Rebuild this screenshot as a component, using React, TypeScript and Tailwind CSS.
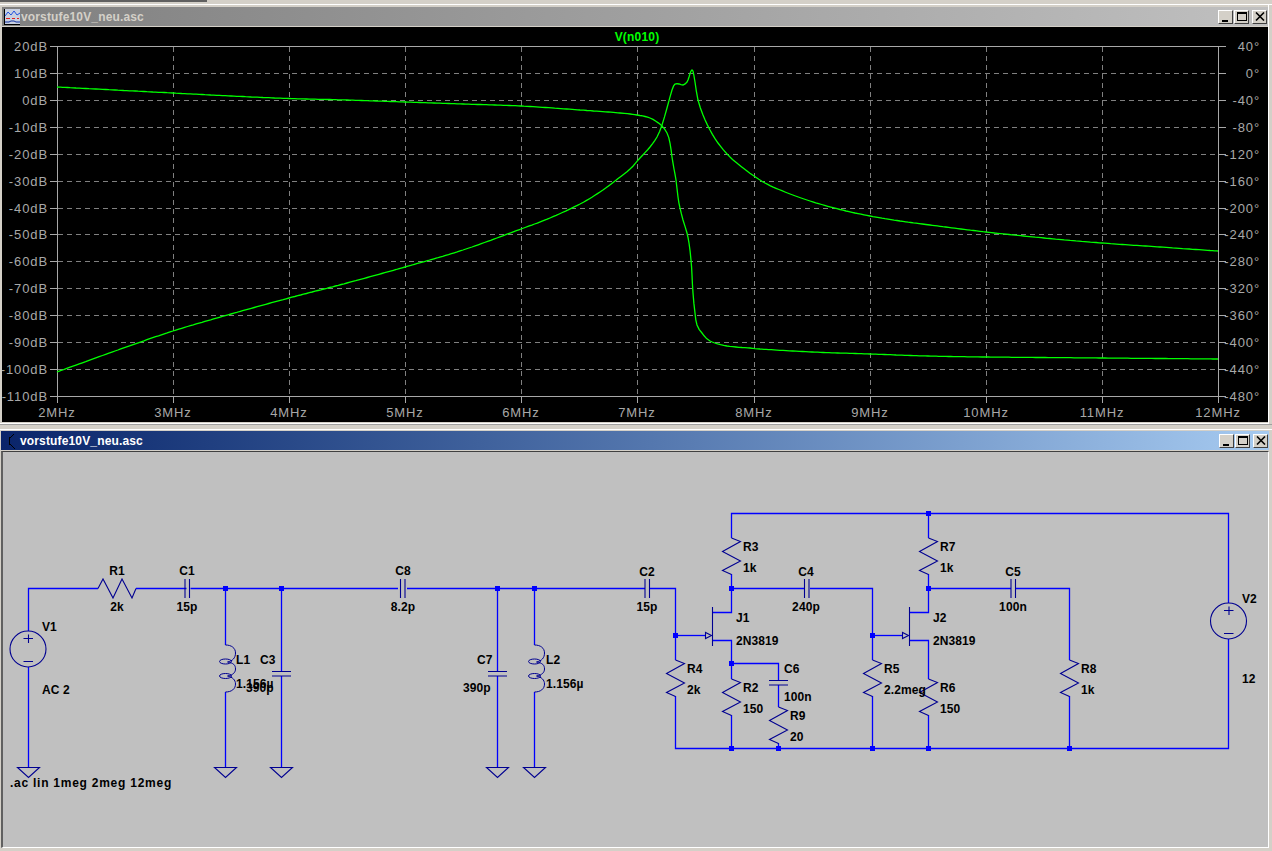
import React from "react";

const GX = [57, 173, 289, 405, 521, 637, 754, 870, 986, 1102, 1218];
const GXL = ["2MHz", "3MHz", "4MHz", "5MHz", "6MHz", "7MHz", "8MHz", "9MHz", "10MHz", "11MHz", "12MHz"];
const DB = ["20dB", "10dB", "0dB", "-10dB", "-20dB", "-30dB", "-40dB", "-50dB", "-60dB", "-70dB", "-80dB", "-90dB", "-100dB", "-110dB"];
const DEG = ["40°", "0°", "-40°", "-80°", "-120°", "-160°", "-200°", "-240°", "-280°", "-320°", "-360°", "-400°", "-440°", "-480°"];
const gy = (i: number) => Math.round(46 + (i * 350) / 13);

const MAG: [number, number][] = [
  [57, 372], [115, 351], [173, 331], [231, 314], [289, 298], [347, 283], [405, 267], [463, 250], [521, 229], [550, 218], [580, 204], [600, 192], [615, 181], [630, 169], [640, 158], [650, 147], [657, 137], [662, 125], [667, 108], [672, 90], [675, 84], [679, 84], [683, 85], [687, 82], [689, 77], [691, 71], [693, 71], [695, 82], [698, 100], [703, 115], [710, 130], [718, 143], [730, 157], [747, 171], [765, 183], [785, 192], [810, 201], [840, 209.5], [870, 216], [900, 221], [930, 225], [986, 232], [1044, 238], [1102, 243], [1160, 247], [1218, 251],
];
const PHASE: [number, number][] = [
  [57, 87], [115, 90], [173, 93], [231, 96], [289, 98.5], [347, 100], [405, 102], [463, 104], [521, 106], [580, 110], [620, 113], [637, 115], [650, 118], [661, 125], [667, 133], [670, 143], [672, 157], [674, 169], [676, 180], [678, 197], [680, 208], [683, 220], [687, 233], [689, 243], [691, 260], [692, 275], [693, 293], [695, 313], [697, 325], [702, 333], [710, 341], [727, 346], [750, 348], [760, 349], [812, 352], [870, 354], [928, 356], [986, 357], [1102, 358], [1218, 359],
];

function smooth(a: [number, number][]) {
  const out: string[] = [];
  for (let i = 0; i < a.length - 1; i++) {
    const p0 = a[Math.max(i - 1, 0)];
    const p1 = a[i];
    const p2 = a[i + 1];
    const p3 = a[Math.min(i + 2, a.length - 1)];
    const n = Math.max(2, Math.ceil(Math.abs(p2[0] - p1[0]) / 3));
    for (let k = 0; k < n; k++) {
      const t = k / n;
      const f = (j: 0 | 1) =>
        0.5 *
        (2 * p1[j] +
          (p2[j] - p0[j]) * t +
          (2 * p0[j] - 5 * p1[j] + 4 * p2[j] - p3[j]) * t * t +
          (3 * p1[j] - p0[j] - 3 * p2[j] + p3[j]) * t * t * t);
      out.push(`${f(0).toFixed(1)},${f(1).toFixed(1)}`);
    }
  }
  const last = a[a.length - 1];
  out.push(`${last[0]},${last[1]}`);
  return out.join(" ");
}

function Buttons() {
  const b = "w-[15px] h-[14px] bg-[#d4d0c8] border border-t-white border-l-white border-r-[#404040] border-b-[#404040] flex items-center justify-center";
  return (
    <div className="flex items-center mr-[1px]">
      <div className={b}>
        <div className="w-[6px] h-[2px] bg-black mt-[8px] -ml-[1px]" />
      </div>
      <div className={`${b} ml-[1px]`}>
        <div className="w-[10px] h-[9px] border border-black border-t-2" />
      </div>
      <div className={`${b} ml-[3px]`}>
        <svg width="10" height="9" viewBox="0 0 10 9">
          <path d="M1 0.5 L9 8.5 M9 0.5 L1 8.5" stroke="#000" strokeWidth="1.6" />
        </svg>
      </div>
    </div>
  );
}

function TitleBar({ active }: { active: boolean }) {
  return (
    <div
      className={`h-[19px] flex items-center justify-between pl-[2px] ${
        active ? "bg-gradient-to-r from-[#0a246a] to-[#a6caf0]" : "bg-gradient-to-r from-[#808080] to-[#c0c0c0]"
      }`}
    >
      <div className="flex items-center gap-[1px]">
        {active ? (
          <svg width="16" height="16" viewBox="0 0 16 16">
            <path d="M6.5 4V12M6.5 5.5L11 1M6.5 10.5L12 16" stroke="#000" strokeWidth="1" fill="none" />
          </svg>
        ) : (
          <svg width="16" height="16" viewBox="0 0 16 16">
            <rect x="0" y="0" width="16" height="16" fill="#c8d0e0" />
            <path d="M0.5 0 V16 M0 15.5 H16" stroke="#000" strokeWidth="1" />
            <path d="M1 7 L4 3 L7 6 L10 2 L13 6 L16 4" stroke="#2050e0" strokeWidth="1" fill="none" />
            <path d="M2 9.5 H6 M8 9.5 H11 M13 9.5 H15" stroke="#e02020" strokeWidth="1" />
            <path d="M1 13 H5 L7 12 H10 L12 13 H16" stroke="#1030a0" strokeWidth="1" fill="none" />
          </svg>
        )}
        <span className={`text-[12px] font-bold tracking-[0.15px] leading-none ${active ? "text-white" : "text-[#d4d0c8]"}`}>
          vorstufe10V_neu.asc
        </span>
      </div>
      <Buttons />
    </div>
  );
}

function Plot() {
  return (
    <svg width="1266" height="395" viewBox="2 27 1266 395" className="block bg-black text-[13px] tracking-[0.9px]">
      {GX.slice(1, -1).map((x) => (
        <line key={x} x1={x + 0.5} y1="47" x2={x + 0.5} y2="396" stroke="#808080" strokeDasharray="5 4" />
      ))}
      {DB.slice(1, -1).map((_, i) => (
        <line key={i} x1="58" y1={gy(i + 1) + 0.5} x2="1218" y2={gy(i + 1) + 0.5} stroke="#808080" strokeDasharray="5 4" />
      ))}
      {DB.map((_, i) => (
        <React.Fragment key={i}>
          <line x1="50" y1={gy(i) + 0.5} x2="58" y2={gy(i) + 0.5} stroke="#a8a8a8" />
          <line x1="1218" y1={gy(i) + 0.5} x2="1226" y2={gy(i) + 0.5} stroke="#a8a8a8" />
        </React.Fragment>
      ))}
      {GX.map((x) => (
        <line key={x} x1={x + 0.5} y1="396" x2={x + 0.5} y2="403" stroke="#a8a8a8" />
      ))}
      <rect x="57.5" y="46.5" width="1161" height="350" fill="none" stroke="#a8a8a8" />
      {DB.map((t, i) => (
        <text key={t} x="48" y={gy(i) + 5} textAnchor="end" fill="#a8a8a8">{t}</text>
      ))}
      {DEG.map((t, i) => (
        <text key={t} x="1260" y={gy(i) + 5} textAnchor="end" fill="#a8a8a8">{t}</text>
      ))}
      {GXL.map((t, i) => (
        <text key={t} x={GX[i]} y="417" textAnchor="middle" fill="#a8a8a8">{t}</text>
      ))}
      <text x="637" y="41" textAnchor="middle" fill="#00ff00" className="text-[12px] font-bold tracking-[0.2px]">V(n010)</text>
      <polyline points={smooth(PHASE)} fill="none" stroke="#00ff00" strokeWidth="1.3" />
      <polyline points={smooth(MAG)} fill="none" stroke="#00ff00" strokeWidth="1.3" />
    </svg>
  );
}

const WIRE = "#0000ff";
const SYM = "#000090";

const WIRES = [
  "M28.5 631V588.5H98", "M136 588.5H186.5", "M190.5 588.5H398", "M28.5 667V768", "M225.5 588.5V645", "M225.5 692V767", "M281.5 588.5V671", "M281.5 676V767",
  "M407 588.5H645", "M497.5 588.5V671", "M497.5 676V767", "M534.5 588.5V645", "M534.5 692V767", "M650 588.5H675.5V660", "M675.5 696V748.5H1228.5V639",
  "M731.5 538V513.5H1228.5V603", "M731.5 574V612.5H712.5", "M731.5 588.5H805", "M810 588.5H872.5V660", "M872.5 696V748", "M712.5 640.5H731.5V679", "M731.5 715V748", "M731.5 663.5H778.5V680",
  "M778.5 685V707", "M778.5 743V748", "M675.5 635.5H705", "M872.5 635.5H902", "M928.5 513.5V538", "M928.5 574V612.5H909.5", "M928.5 588.5H1011", "M1016 588.5H1069.5V660", "M1069.5 696V748", "M909.5 640.5H928.5V679", "M928.5 715V748",
];
const VRES: [number, number][] = [[675.5, 660], [731.5, 538], [731.5, 679], [778.5, 707], [872.5, 660], [928.5, 538], [928.5, 679], [1069.5, 660]];
const JUNC: [number, number][] = [[225.5, 588.5], [281.5, 588.5], [497.5, 588.5], [534.5, 588.5], [675.5, 635.5], [731.5, 588.5], [731.5, 663.5], [731.5, 748.5], [778.5, 748.5], [872.5, 635.5], [872.5, 748.5], [928.5, 513.5], [928.5, 588.5], [928.5, 748.5], [1069.5, 748.5]];
const HCAP = [187, 402.5, 647, 806.5, 1013];
const VCAP: [number, number][] = [[281.5, 671], [497.5, 671], [778.5, 680]];
const GND = [28.5, 225.5, 281.5, 497.5, 534.5];
const COILS = [225.5, 534.5];
const FETS = [712.5, 909.5];
const SRC: [number, number][] = [[28, 649], [1228.5, 621]];

const LABELS: [string, number, number, string?][] = [
  ["V1", 42, 626], ["AC 2", 42, 689],
  ["R1", 117, 570, "middle"], ["2k", 117, 606, "middle"], ["C1", 187, 570, "middle"], ["15p", 187, 606, "middle"],
  ["L1", 236, 659], ["1.156µ", 236, 683], ["C3", 260, 659], ["390p", 246, 687],
  ["C8", 403, 570, "middle"], ["8.2p", 403, 606, "middle"], ["C7", 477, 659], ["390p", 463, 687], ["L2", 546, 659], ["1.156µ", 546, 683],
  ["C2", 647, 571, "middle"], ["15p", 647, 606, "middle"], ["R3", 743, 546], ["1k", 743, 567], ["J1", 736, 617], ["2N3819", 736, 640],
  ["R4", 687, 668], ["2k", 687, 689], ["R2", 743, 687], ["150", 743, 708], ["C6", 784, 668], ["100n", 784, 696], ["R9", 790, 715], ["20", 790, 736],
  ["C4", 806, 571, "middle"], ["240p", 806, 606, "middle"], ["R5", 884, 668], ["2.2meg", 884, 689], ["R7", 940, 546], ["1k", 940, 567], ["J2", 933, 617], ["2N3819", 933, 640],
  ["R6", 940, 687], ["150", 940, 708], ["C5", 1013, 571, "middle"], ["100n", 1013, 606, "middle"], ["R8", 1081, 668], ["1k", 1081, 689], ["V2", 1242, 598], ["12", 1242, 678],
];

function Schematic() {
  return (
    <svg width="1265" height="395" viewBox="3 452 1265 395" className="block bg-[#c0c0c0] text-[12px] font-bold tracking-[0.1px]">
      {WIRES.map((d) => (
        <path key={d} d={d} fill="none" stroke={WIRE} strokeWidth="1.3" />
      ))}
      <g fill="none" stroke={SYM} strokeWidth="1.1">
        <path d="M98 588.5L103 579L113 598L122 579L132 598L136 588.5" />
        {VRES.map(([x, y]) => (
          <path key={`${x}-${y}`} d={`M${x} ${y}l9 3.5l-18 10l18 9.5l-18 9.5l9 4`} />
        ))}
        {HCAP.map((x) => (
          <path key={x} d={`M${x - 2} 579V598M${x + 2.5} 579V598`} />
        ))}
        {VCAP.map(([x, y]) => (
          <path key={x} d={`M${x - 9.5} ${y + 0.5}H${x + 9.5}M${x - 9.5} ${y + 5}H${x + 9.5}`} />
        ))}
        {GND.map((x) => (
          <path key={x} d={`M${x - 11} 767.5H${x + 11}L${x} 777.5Z`} />
        ))}
        {COILS.map((x) => (
          <g key={x} strokeWidth="1">
            <path d={`M${x} 645C${x + 6} 645 ${x + 10} 648 ${x + 10} 653C${x + 10} 658 ${x + 7} 661 ${x + 2} 662`} />
            <path d={`M${x + 2} 662C${x + 8} 663 ${x + 10} 665 ${x + 10} 669C${x + 10} 672 ${x + 8} 675 ${x + 2} 676`} />
            <path d={`M${x + 2} 676C${x + 7} 677 ${x + 10} 680 ${x + 10} 684C${x + 10} 689 ${x + 6} 692 ${x} 692`} />
            <ellipse cx={x} cy="661.5" rx="6" ry="2.5" />
            <ellipse cx={x} cy="676" rx="6" ry="2.5" />
          </g>
        ))}
        {FETS.map((x) => (
          <g key={x}>
            <path d={`M${x} 607V646`} />
            <path d={`M${x - 7} 632.5V638.5L${x - 1} 635.5Z`} />
          </g>
        ))}
        {SRC.map(([x, y]) => (
          <g key={x}>
            <circle cx={x} cy={y} r="18" />
            <path d={`M${x - 4.5} ${y - 10.5}H${x + 5}M${x + 0.5} ${y - 14.5}V${y - 6}M${x - 4.5} ${y + 12.5}H${x + 5}`} />
          </g>
        ))}
      </g>
      {JUNC.map(([x, y]) => (
        <rect key={`${x}-${y}`} x={x - 2.5} y={y - 2.5} width="5" height="5" fill={WIRE} />
      ))}
      {LABELS.map(([t, x, y, a], i) => (
        <text key={i} x={x} y={y + 4.5} textAnchor={(a as "middle") || "start"} fill="#000">{t}</text>
      ))}
      <text x="10" y="786.5" fill="#000" className="tracking-[0.75px]">.ac lin 1meg 2meg 12meg</text>
    </svg>
  );
}

export default function App() {
  return (
    <div className="w-[1272px] h-[851px] overflow-hidden bg-[#d4d0c8] font-['Liberation_Sans',Arial,sans-serif]">
      <div className="h-[2px] w-[207px] bg-[#606060]" />
      <div className="h-[2px]" />
      <div className="h-[1px] bg-white" />
      <div className="ml-0 mr-[3px] pl-[2px] pt-[2px] h-[419px] flex flex-col border-r border-b border-white">
        <TitleBar active={false} />
        <div className="h-[1px]" />
        <Plot />
      </div>
      <div className="h-[1px] bg-[#a0a0a0]" />
      <div className="h-[4px]" />
      <div className="h-[1px] bg-white" />
      <div className="pl-[1px] mr-[3px] pt-[1px]">
        <TitleBar active />
        <div className="h-[1px] bg-[#d4d0c8]" />
        <div className="border-t border-l-2 border-r border-b border-t-[#404040] border-l-[#606060] border-r-white border-b-white h-[397px]">
          <Schematic />
        </div>
      </div>
    </div>
  );
}
